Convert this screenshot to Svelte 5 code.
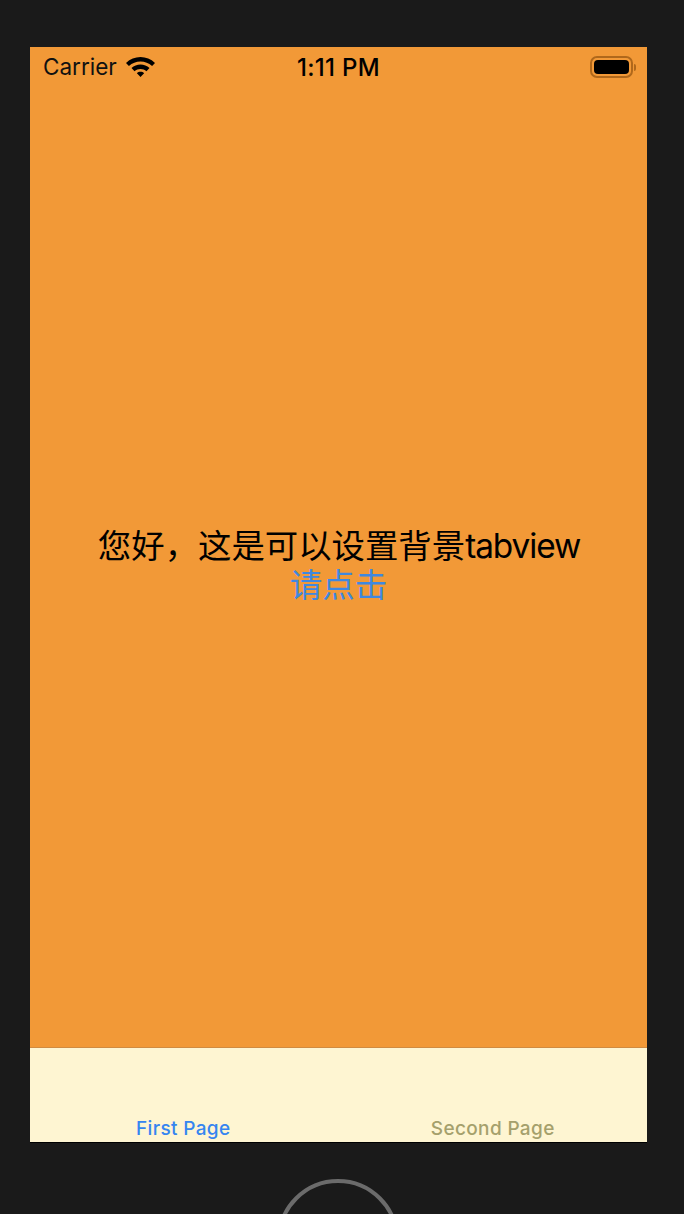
<script>
  const tabs = [
    { label: 'First Page', active: true },
    { label: 'Second Page', active: false }
  ];
</script>

<div class="device">
  <div class="screen">
    <main class="content">
      <header class="status">
        <div class="status-left">
          <span class="carrier">Carrier</span>
          <svg class="wifi" viewBox="1.600 3 24.800 17" width="29" height="20" aria-hidden="true">
            <path d="M14 3C9.400 3 5.100 4.800 1.600 8l2.500 2.700C6.900 8.200 10.300 6.800 14 6.800s7.100 1.400 9.900 3.900L26.400 8C22.900 4.800 18.600 3 14 3z" />
            <path d="M14 9.400c-2.900 0-5.600 1.100-7.700 3l2.600 2.700c1.400-1.200 3.200-1.900 5.100-1.900s3.700.7 5.100 1.900l2.600-2.700c-2.100-1.900-4.800-3-7.700-3z" />
            <path d="M14 15.600c-1.200 0-2.300.4-3.100 1.200L14 20l3.100-3.200c-.8-.8-1.900-1.200-3.100-1.200z" />
          </svg>
        </div>
        <span class="time">1:11 PM</span>
        <div class="status-right">
          <span class="battery"><span class="level"></span></span>
          <span class="cap"></span>
        </div>
      </header>
      <div class="center">
        <p class="title">您好，这是可以设置背景<span class="latin">tabview</span></p>
        <p class="link">请点击</p>
      </div>
    </main>
    <nav class="tabbar">
      {#each tabs as tab}
        <span class="tab" class:active={tab.active}>{tab.label}</span>
      {/each}
    </nav>
  </div>
  <div class="home"></div>
</div>

<style>
  :global(body) {
    margin: 0;
    background: #1a1a1a;
  }
  .device {
    height: 1214px;
    box-sizing: border-box;
    padding: 47px 37px 0 30px;
    overflow: hidden;
    background: #1a1a1a;
    font-family: Inter, "Noto Sans CJK SC", sans-serif;
  }
  .screen {
    height: 1095px;
    display: flex;
    flex-direction: column;
    box-shadow: 0 1px 0 #000;
  }
  .content {
    flex: 1;
    display: flex;
    flex-direction: column;
    background: #f29937;
    border-bottom: 1px solid #d08b41;
  }
  .status {
    display: grid;
    grid-template-columns: 1fr auto 1fr;
    align-items: center;
    height: 40px;
    padding: 0 13px;
    color: #000;
  }
  .status-left {
    display: flex;
    align-items: center;
    gap: 9px;
  }
  .carrier {
    font-size: 22.500px;
    line-height: 26px;
    margin-top: -1px;
    color: #111;
  }
  .wifi {
    fill: #000;
    margin-top: -1px;
  }
  .time {
    font-size: 24px;
    font-weight: 500;
    letter-spacing: 0.3px;
    white-space: nowrap;
  }
  .status-right {
    display: flex;
    align-items: center;
    justify-content: flex-end;
    gap: 1px;
    margin-right: -2px;
  }
  .battery {
    display: block;
    box-sizing: border-box;
    width: 43px;
    height: 22px;
    border: 2px solid #b0681b;
    border-radius: 7px;
    padding: 2px;
  }
  .level {
    display: block;
    height: 100%;
    background: #000;
    border-radius: 4px;
  }
  .cap {
    width: 2px;
    height: 7px;
    border-radius: 0 2px 2px 0;
    background: #b0681b;
  }
  .center {
    flex: 1;
    display: flex;
    flex-direction: column;
    align-items: center;
    justify-content: center;
    padding-bottom: 2px;
    text-align: center;
  }
  .center p {
    margin: 0;
    line-height: 40px;
  }
  .title {
    font-size: 33.400px;
    color: #000;
    padding-left: 1px;
  }
  .latin {
    letter-spacing: -1.100px;
  }
  .link {
    font-size: 32.500px;
    color: #3f88e0;
  }
  .tabbar {
    height: 94px;
    flex-shrink: 0;
    display: grid;
    grid-template-columns: 1fr 1fr;
    align-items: end;
    background: #fef5d2;
    text-align: center;
  }
  .tab {
    font-size: 19px;
    font-weight: 500;
    letter-spacing: 0.35px;
    line-height: 26px;
    color: #a5a06c;
  }
  .tab.active {
    color: #3685f0;
    padding-right: 2px;
  }
  .home {
    box-sizing: border-box;
    width: 122px;
    height: 122px;
    margin: 37px 0 0 247px;
    border: 4px solid #6b6b6b;
    border-radius: 50%;
  }
</style>
